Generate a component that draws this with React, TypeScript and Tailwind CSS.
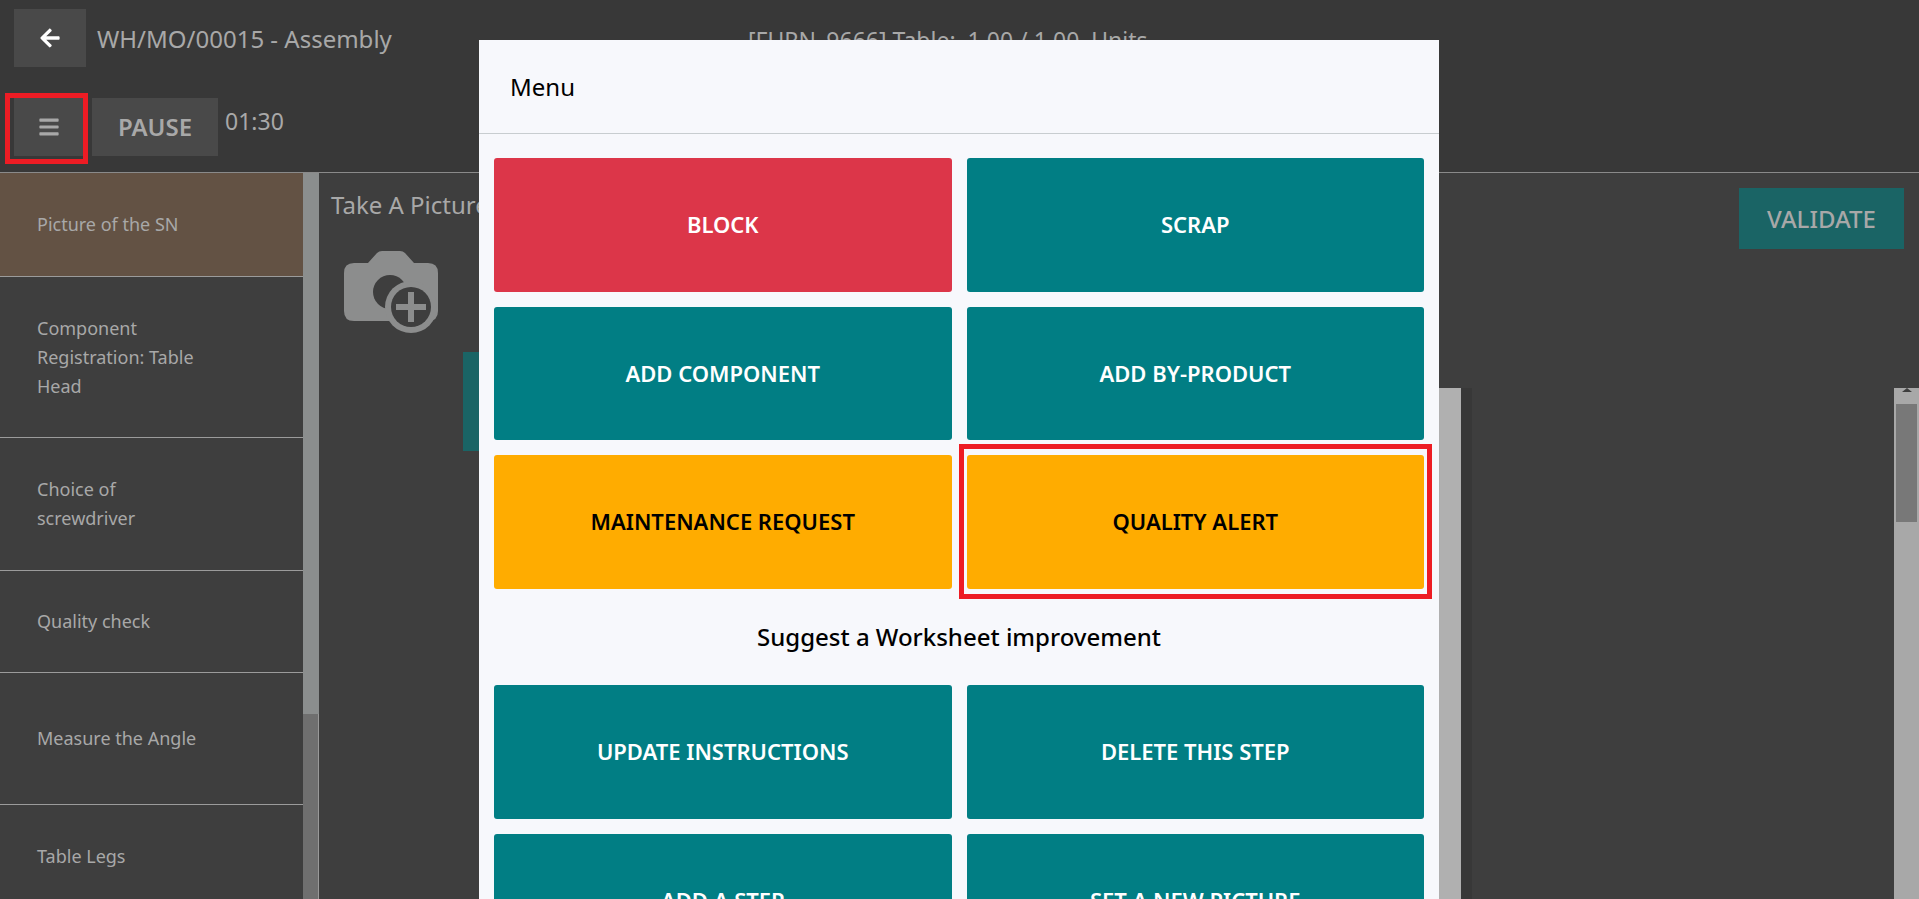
import { FaArrowLeft, FaBars } from 'react-icons/fa';

const steps = [
  { label: 'Component Registration: Table Head', h: 'h-[161px]' },
  { label: 'Choice of screwdriver', h: 'h-[133px]' },
  { label: 'Quality check', h: 'h-[102px]' },
  { label: 'Measure the Angle', h: 'h-[132px]' },
  { label: 'Table Legs', h: 'h-[103px]' },
];

function MenuButton({ label, color = 'teal' }: { label: string; color?: 'teal' | 'red' | 'amber' }) {
  const tone =
    color === 'red'
      ? 'bg-[#dc3649] text-white'
      : color === 'amber'
        ? 'bg-[#ffac00] text-black font-medium'
        : 'bg-[#017e84] text-white';
  return (
    <button className={`h-[133.5px] rounded-[3px] text-[22px] font-semibold ${tone}`}>{label}</button>
  );
}

function CameraPlus() {
  return (
    <svg width="94" height="82" viewBox="0 0 94 82" className="ml-[25px] mt-[30px] block">
      <path
        d="M24 12 L33 2 Q35 0 38 0 H56 Q59 0 61 2 L70 12 H84 Q94 12 94 22 V60 Q94 70 84 70 H10 Q0 70 0 60 V22 Q0 12 10 12 Z"
        fill="#8c8d8d"
      />
      <circle cx="46" cy="41" r="17" fill="#3e3e3e" />
      <circle cx="67" cy="56" r="26" fill="#8c8d8d" />
      <circle cx="67" cy="56" r="20" fill="#3e3e3e" />
      <rect x="52" y="53" width="30" height="6" fill="#8c8d8d" />
      <rect x="64" y="41" width="6" height="30" fill="#8c8d8d" />
    </svg>
  );
}

export default function App() {
  return (
    <div className="relative flex h-[899px] w-full flex-col overflow-hidden bg-[#3e3e3e] font-['Noto_Sans',sans-serif] text-[#a8a8a8]">
      {/* top bar */}
      <header className="h-[173px] shrink-0 border-b border-[#8a8a8a] bg-[#383838]">
        <div className="relative flex h-[67px] items-end pl-[14px]">
          <button className="flex h-[58px] w-[72px] items-center justify-center bg-[#494949] text-white">
            <FaArrowLeft size={22} />
          </button>
          <span className="ml-[11px] pb-[12px] text-[24px] leading-[32px]">WH/MO/00015 - Assembly</span>
          <span className="absolute left-[748px] top-[24px] whitespace-nowrap text-[23px] leading-[32px]">
            [FURN_9666] Table: &nbsp;1.00 / 1.00 &nbsp;Units
          </span>
        </div>
        <div className="mt-[31px] flex items-start pl-[14px]">
          <button className="flex h-[58px] w-[69px] items-center justify-center bg-[#494949]">
            <FaBars size={22} />
          </button>
          <button className="ml-[9px] h-[58px] w-[126px] bg-[#494949] text-[24px] font-semibold">PAUSE</button>
          <span className="ml-[7px] text-[23px] leading-[46px]">01:30</span>
        </div>
      </header>

      <div className="flex min-h-0 flex-1">
        {/* steps */}
        <aside className="w-[303px] shrink-0">
          <div className="flex h-[104px] items-center border-b border-[#9b9b9b] bg-[#635244] pl-[37px] text-[18px]">
            Picture of the SN
          </div>
          {steps.map((s) => (
            <div
              key={s.label}
              className={`flex items-center border-b border-[#9b9b9b] pl-[37px] pr-[90px] text-[18px] leading-[29px] ${s.h}`}
            >
              {s.label}
            </div>
          ))}
        </aside>
        <div className="flex w-[16px] shrink-0 flex-col">
          <div className="h-[541px] bg-[#8b8e8e]" />
          <div className="flex-1 border-r border-[#999999] bg-[#6f6f6f]" />
        </div>

        {/* work area, left part */}
        <div className="w-[160px] shrink-0">
          <p className="mt-[16px] ml-[12px] whitespace-nowrap text-[24px] leading-[32px]">Take A Picture</p>
          <CameraPlus />
          <div className="ml-[144px] mt-[19px] h-[99px] w-[16px] bg-[#1a6465]" />
        </div>

        {/* work area, right part */}
        <div className="flex flex-1 flex-col">
          <div className="flex h-[215px] shrink-0 justify-end pr-[15px] pt-[15px]">
            <button className="h-[61px] w-[165px] bg-[#1a6465] text-[24px] font-medium">VALIDATE</button>
          </div>
          <div className="flex flex-1">
            <div className="w-[960px] shrink-0" />
            <div className="w-[22px] shrink-0 bg-[#b0b0b0]" />
            <div className="w-[11px] shrink-0 bg-[#383838]" />
            <div className="flex-1" />
            <div className="w-[25px] shrink-0 bg-[#a8a8a8] px-[2px]">
              <div className="mx-auto h-0 w-0 border-x-[5px] border-b-[4px] border-x-transparent border-b-[#3e3e3e]" />
              <div className="mt-[12px] h-[118px] bg-[#787878]" />
            </div>
          </div>
        </div>
      </div>

      {/* annotation round the menu button */}
      <div className="absolute left-[5px] top-[93px] h-[71px] w-[83px] border-[5px] border-[#ed1c24]" />

      {/* menu dialog */}
      <div className="absolute left-[479px] top-[40px] z-10 w-[960px] bg-[#f7f8fc] text-black">
        <div className="flex h-[94px] items-center border-b border-[#c8cdd0] pl-[31px] text-[24px]">Menu</div>
        <div className="px-[15px] pt-[24px]">
          <div className="relative grid grid-cols-2 gap-[15px]">
            <MenuButton label="BLOCK" color="red" />
            <MenuButton label="SCRAP" />
            <MenuButton label="ADD COMPONENT" />
            <MenuButton label="ADD BY-PRODUCT" />
            <MenuButton label="MAINTENANCE REQUEST" color="amber" />
            <MenuButton label="QUALITY ALERT" color="amber" />
            <div className="absolute bottom-[-10px] right-[-8px] h-[155px] w-[473px] border-[5px] border-[#ed1c24]" />
          </div>
          <h2 className="flex h-[96.5px] items-center justify-center text-[24px] font-medium">
            Suggest a Worksheet improvement
          </h2>
          <div className="grid grid-cols-2 gap-[15px]">
            <MenuButton label="UPDATE INSTRUCTIONS" />
            <MenuButton label="DELETE THIS STEP" />
            <MenuButton label="ADD A STEP" />
            <MenuButton label="SET A NEW PICTURE" />
          </div>
        </div>
      </div>
    </div>
  );
}
